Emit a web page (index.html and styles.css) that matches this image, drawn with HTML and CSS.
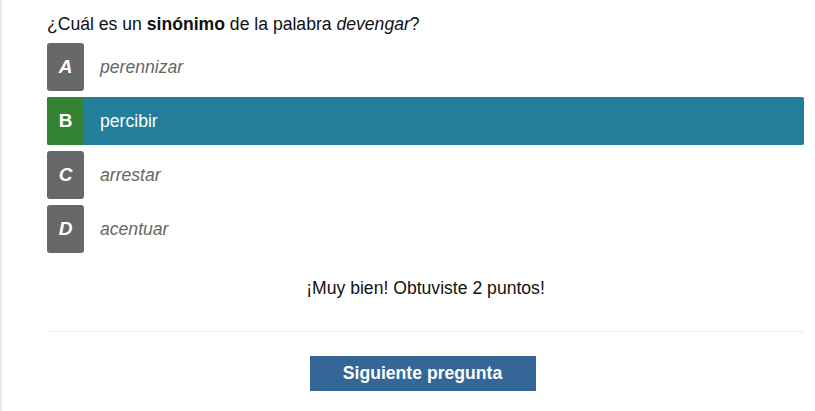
FILE: index.html
```html
<!DOCTYPE html>
<html lang="es">
<head>
<meta charset="utf-8">
<link rel="stylesheet" href="styles.css">
</head>
<body>
<div class="page">
  <div class="quiz">
    <p class="question">¿Cuál es un <b>sinónimo</b> de la palabra <i>devengar</i>?</p>
    <div class="options">
      <div class="option"><span class="letter">A</span><span class="text">perennizar</span></div>
      <div class="option selected"><span class="letter">B</span><span class="text">percibir</span></div>
      <div class="option"><span class="letter">C</span><span class="text">arrestar</span></div>
      <div class="option"><span class="letter">D</span><span class="text">acentuar</span></div>
    </div>
    <p class="feedback">¡Muy bien! Obtuviste 2 puntos!</p>
    <hr class="divider">
    <div class="actions"><button class="next">Siguiente pregunta</button></div>
  </div>
</div>
</body>
</html>
```
FILE: styles.css
```css
html, body {
  margin: 0;
  padding: 0;
  background: #fff;
}
body {
  font-family: "Liberation Sans", Arial, sans-serif;
  font-size: 17.6px;
  color: #111;
}
.page {
  height: 411px;
  border-left: 2px solid #e8e8e8;
  box-sizing: border-box;
  padding: 0 11px 0 45px;
}
.question {
  margin: 0;
  padding-top: 14px;
  height: 29px;
  line-height: 20px;
}
.options {
  display: flex;
  flex-direction: column;
  gap: 6px;
}
.option {
  display: flex;
  align-items: center;
  height: 48px;
  border-radius: 3px;
}
.letter {
  width: 37px;
  height: 48px;
  display: flex;
  align-items: center;
  justify-content: center;
  background: #686868;
  color: #fff;
  font-weight: bold;
  font-style: italic;
  font-size: 19px;
  border-radius: 3px;
}
.text {
  margin-left: 16px;
  font-style: italic;
  color: #666;
}
.option.selected {
  background: #227e9a;
  border-radius: 2px;
}
.option.selected .letter {
  background: #348233;
  font-style: normal;
  border-radius: 2px 0 0 2px;
}
.option.selected .text {
  color: #fff;
  font-style: normal;
}
.feedback {
  margin: 0;
  padding-top: 25px;
  text-align: center;
  line-height: 20px;
  height: 53px;
}
.divider {
  margin: 0;
  border: 0;
  border-top: 1px solid #ececec;
}
.actions {
  display: flex;
  justify-content: center;
  padding-top: 24px;
}
.next {
  width: 226px;
  height: 35px;
  padding: 0;
  border: 0;
  background: #346798;
  color: #fff;
  font-family: "Liberation Sans", Arial, sans-serif;
  font-size: 17.6px;
  font-weight: bold;
  margin-left: -6px;
}
```
